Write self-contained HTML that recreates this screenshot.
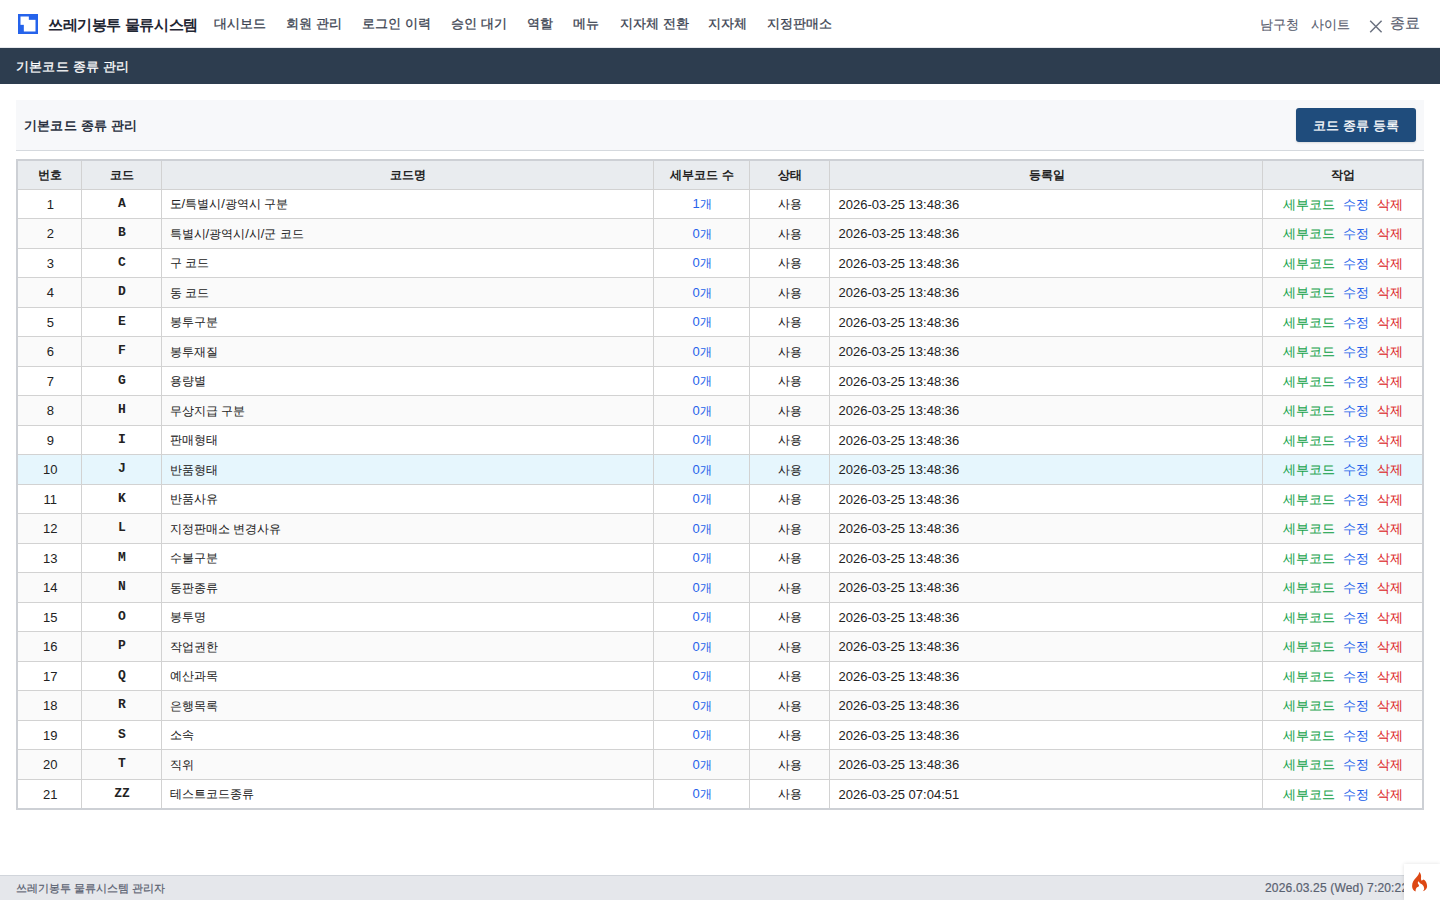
<!DOCTYPE html>
<html lang="ko"><head><meta charset="utf-8">
<style>
*{box-sizing:border-box}
html,body{margin:0;padding:0;width:1440px;height:900px;overflow:hidden;background:#fff;font-family:"Liberation Sans",sans-serif;color:#222}
.top{position:absolute;left:0;top:0;width:1440px;height:48px;background:#fff;border-bottom:1px solid #e6e8ec}
.logo{position:absolute;left:18px;top:14px;width:20px;height:20px}
.logo i{position:absolute;background:#fff}
.brand{position:absolute;left:48px;top:15px;font-size:15px;letter-spacing:-0.4px;font-weight:bold;color:#1f2633;line-height:20px;white-space:nowrap}
.nav{position:absolute;top:14px;font-size:13px;color:#3b4351;line-height:20px;white-space:nowrap;-webkit-text-stroke:0.3px #3b4351}
.rnav{position:absolute;top:14.5px;font-size:13px;color:#596070;-webkit-text-stroke:0.15px #596070;line-height:20px;white-space:nowrap}
.bar{position:absolute;left:0;top:48px;width:1440px;height:36px;background:#2d3d4f;color:#fff;font-size:13px;line-height:36px;padding-top:1px;padding-left:16px;letter-spacing:0.2px;-webkit-text-stroke:0.3px #fff}
.card{position:absolute;left:16px;top:100px;width:1408px;height:51px;background:#f7f8fa;border-bottom:1px solid #d5d9de}
.card .t{position:absolute;left:8px;top:16px;letter-spacing:0.2px;font-size:13px;font-weight:bold;line-height:20px;color:#2a3140}
.btn{position:absolute;right:8px;top:8px;width:120px;height:34px;background:#1f4c7c;color:#fff;border-radius:3px;font-size:13px;line-height:36px;text-align:center;-webkit-text-stroke:0.3px #fff;box-shadow:0 1px 2px rgba(0,0,0,.12)}
table{position:absolute;left:16px;top:159px;width:1408px;border-collapse:collapse;border:2px solid #cdd0d5;font-size:13px}
th{background:#e9ecef;font-weight:bold;height:29px;border:1px solid #d2d2d2;padding:2px 0 0 2px;color:#222;font-size:12px}
td{border:1px solid #d2d2d2;height:29.5px;padding:1px 8px 0 9px;line-height:17px;color:#222}
td.c{text-align:center;padding-left:10px;padding-right:8px}
tr.alt td{background:#fafafa}
tr.hl td{background:#e6f6fd}
.k{font-size:12px;-webkit-text-stroke:0.05px currentColor}
td:nth-child(3){padding-left:8px}.act .k{font-size:13px}
.code{font-family:"Liberation Mono",monospace;font-weight:bold;padding-top:0!important;padding-bottom:1px!important}
.cnt{color:#2563eb}
.act>span{margin:0 4px;-webkit-text-stroke:0.2px currentColor}
.act{padding-left:10px}
.g{color:#16a34a}.b{color:#2563eb}.r{color:#dc2626}
.foot{position:absolute;left:0;top:875px;width:1440px;height:25px;background:#e5e7eb;border-top:1px solid #d1d5db;font-size:11px;color:#596170;line-height:24px;-webkit-text-stroke:0.2px #596170}
.ci{position:absolute;left:1404px;top:864px;width:36px;height:36px;background:#fff;box-shadow:0 0 4px rgba(0,0,0,.12)}
</style></head><body>
<div class="top">
  <svg class="logo" width="20" height="20" viewBox="0 0 24 24"><rect width="24" height="24" fill="#2563eb"/><rect x="3" y="3" width="10" height="10" fill="#fff"/><rect x="7" y="7" width="14" height="14" fill="#fff"/></svg>
  <div class="brand">쓰레기봉투 물류시스템</div>
  <div class="nav" style="left:214px">대시보드</div>
  <div class="nav" style="left:286px">회원 관리</div>
  <div class="nav" style="left:362px">로그인 이력</div>
  <div class="nav" style="left:451px">승인 대기</div>
  <div class="nav" style="left:527px">역할</div>
  <div class="nav" style="left:573px">메뉴</div>
  <div class="nav" style="left:620px">지자체 전환</div>
  <div class="nav" style="left:708px">지자체</div>
  <div class="nav" style="left:767px">지정판매소</div>
  <div class="rnav" style="left:1260px">남구청</div>
  <div class="rnav" style="left:1311px">사이트</div>
  <svg style="position:absolute;left:1369px;top:20px" width="14" height="13" viewBox="0 0 14 13"><path d="M1.2 0.8L12.6 12.2M12.6 0.8L1.2 12.2" stroke="#6b7280" stroke-width="1.5" fill="none"/></svg>
  <div class="rnav" style="left:1389.5px;font-size:15px;top:13px;letter-spacing:0.8px">종료</div>
</div>
<div class="bar">기본코드 종류 관리</div>
<div class="card"><div class="t">기본코드 종류 관리</div><div class="btn">코드 종류 등록</div></div>
<table>
<colgroup><col style="width:64px"><col style="width:80px"><col style="width:492px"><col style="width:96px"><col style="width:80px"><col style="width:433px"><col></colgroup>
<tr><th>번호</th><th>코드</th><th>코드명</th><th>세부코드 수</th><th>상태</th><th>등록일</th><th>작업</th></tr>
<tr><td class="c">1</td><td class="c code">A</td><td><span class="k">도</span>/<span class="k">특별시</span>/<span class="k">광역시</span> <span class="k">구분</span></td><td class="c cnt">1<span class="k">개</span></td><td class="c"><span class="k">사용</span></td><td>2026-03-25 13:48:36</td><td class="c act"><span class="g"><span class="k">세부코드</span></span><span class="b"><span class="k">수정</span></span><span class="r"><span class="k">삭제</span></span></td></tr>
<tr class="alt"><td class="c">2</td><td class="c code">B</td><td><span class="k">특별시</span>/<span class="k">광역시</span>/<span class="k">시</span>/<span class="k">군</span> <span class="k">코드</span></td><td class="c cnt">0<span class="k">개</span></td><td class="c"><span class="k">사용</span></td><td>2026-03-25 13:48:36</td><td class="c act"><span class="g"><span class="k">세부코드</span></span><span class="b"><span class="k">수정</span></span><span class="r"><span class="k">삭제</span></span></td></tr>
<tr><td class="c">3</td><td class="c code">C</td><td><span class="k">구</span> <span class="k">코드</span></td><td class="c cnt">0<span class="k">개</span></td><td class="c"><span class="k">사용</span></td><td>2026-03-25 13:48:36</td><td class="c act"><span class="g"><span class="k">세부코드</span></span><span class="b"><span class="k">수정</span></span><span class="r"><span class="k">삭제</span></span></td></tr>
<tr class="alt"><td class="c">4</td><td class="c code">D</td><td><span class="k">동</span> <span class="k">코드</span></td><td class="c cnt">0<span class="k">개</span></td><td class="c"><span class="k">사용</span></td><td>2026-03-25 13:48:36</td><td class="c act"><span class="g"><span class="k">세부코드</span></span><span class="b"><span class="k">수정</span></span><span class="r"><span class="k">삭제</span></span></td></tr>
<tr><td class="c">5</td><td class="c code">E</td><td><span class="k">봉투구분</span></td><td class="c cnt">0<span class="k">개</span></td><td class="c"><span class="k">사용</span></td><td>2026-03-25 13:48:36</td><td class="c act"><span class="g"><span class="k">세부코드</span></span><span class="b"><span class="k">수정</span></span><span class="r"><span class="k">삭제</span></span></td></tr>
<tr class="alt"><td class="c">6</td><td class="c code">F</td><td><span class="k">봉투재질</span></td><td class="c cnt">0<span class="k">개</span></td><td class="c"><span class="k">사용</span></td><td>2026-03-25 13:48:36</td><td class="c act"><span class="g"><span class="k">세부코드</span></span><span class="b"><span class="k">수정</span></span><span class="r"><span class="k">삭제</span></span></td></tr>
<tr><td class="c">7</td><td class="c code">G</td><td><span class="k">용량별</span></td><td class="c cnt">0<span class="k">개</span></td><td class="c"><span class="k">사용</span></td><td>2026-03-25 13:48:36</td><td class="c act"><span class="g"><span class="k">세부코드</span></span><span class="b"><span class="k">수정</span></span><span class="r"><span class="k">삭제</span></span></td></tr>
<tr class="alt"><td class="c">8</td><td class="c code">H</td><td><span class="k">무상지급</span> <span class="k">구분</span></td><td class="c cnt">0<span class="k">개</span></td><td class="c"><span class="k">사용</span></td><td>2026-03-25 13:48:36</td><td class="c act"><span class="g"><span class="k">세부코드</span></span><span class="b"><span class="k">수정</span></span><span class="r"><span class="k">삭제</span></span></td></tr>
<tr><td class="c">9</td><td class="c code">I</td><td><span class="k">판매형태</span></td><td class="c cnt">0<span class="k">개</span></td><td class="c"><span class="k">사용</span></td><td>2026-03-25 13:48:36</td><td class="c act"><span class="g"><span class="k">세부코드</span></span><span class="b"><span class="k">수정</span></span><span class="r"><span class="k">삭제</span></span></td></tr>
<tr class="alt hl"><td class="c">10</td><td class="c code">J</td><td><span class="k">반품형태</span></td><td class="c cnt">0<span class="k">개</span></td><td class="c"><span class="k">사용</span></td><td>2026-03-25 13:48:36</td><td class="c act"><span class="g"><span class="k">세부코드</span></span><span class="b"><span class="k">수정</span></span><span class="r"><span class="k">삭제</span></span></td></tr>
<tr><td class="c">11</td><td class="c code">K</td><td><span class="k">반품사유</span></td><td class="c cnt">0<span class="k">개</span></td><td class="c"><span class="k">사용</span></td><td>2026-03-25 13:48:36</td><td class="c act"><span class="g"><span class="k">세부코드</span></span><span class="b"><span class="k">수정</span></span><span class="r"><span class="k">삭제</span></span></td></tr>
<tr class="alt"><td class="c">12</td><td class="c code">L</td><td><span class="k">지정판매소</span> <span class="k">변경사유</span></td><td class="c cnt">0<span class="k">개</span></td><td class="c"><span class="k">사용</span></td><td>2026-03-25 13:48:36</td><td class="c act"><span class="g"><span class="k">세부코드</span></span><span class="b"><span class="k">수정</span></span><span class="r"><span class="k">삭제</span></span></td></tr>
<tr><td class="c">13</td><td class="c code">M</td><td><span class="k">수불구분</span></td><td class="c cnt">0<span class="k">개</span></td><td class="c"><span class="k">사용</span></td><td>2026-03-25 13:48:36</td><td class="c act"><span class="g"><span class="k">세부코드</span></span><span class="b"><span class="k">수정</span></span><span class="r"><span class="k">삭제</span></span></td></tr>
<tr class="alt"><td class="c">14</td><td class="c code">N</td><td><span class="k">동판종류</span></td><td class="c cnt">0<span class="k">개</span></td><td class="c"><span class="k">사용</span></td><td>2026-03-25 13:48:36</td><td class="c act"><span class="g"><span class="k">세부코드</span></span><span class="b"><span class="k">수정</span></span><span class="r"><span class="k">삭제</span></span></td></tr>
<tr><td class="c">15</td><td class="c code">O</td><td><span class="k">봉투명</span></td><td class="c cnt">0<span class="k">개</span></td><td class="c"><span class="k">사용</span></td><td>2026-03-25 13:48:36</td><td class="c act"><span class="g"><span class="k">세부코드</span></span><span class="b"><span class="k">수정</span></span><span class="r"><span class="k">삭제</span></span></td></tr>
<tr class="alt"><td class="c">16</td><td class="c code">P</td><td><span class="k">작업권한</span></td><td class="c cnt">0<span class="k">개</span></td><td class="c"><span class="k">사용</span></td><td>2026-03-25 13:48:36</td><td class="c act"><span class="g"><span class="k">세부코드</span></span><span class="b"><span class="k">수정</span></span><span class="r"><span class="k">삭제</span></span></td></tr>
<tr><td class="c">17</td><td class="c code">Q</td><td><span class="k">예산과목</span></td><td class="c cnt">0<span class="k">개</span></td><td class="c"><span class="k">사용</span></td><td>2026-03-25 13:48:36</td><td class="c act"><span class="g"><span class="k">세부코드</span></span><span class="b"><span class="k">수정</span></span><span class="r"><span class="k">삭제</span></span></td></tr>
<tr class="alt"><td class="c">18</td><td class="c code">R</td><td><span class="k">은행목록</span></td><td class="c cnt">0<span class="k">개</span></td><td class="c"><span class="k">사용</span></td><td>2026-03-25 13:48:36</td><td class="c act"><span class="g"><span class="k">세부코드</span></span><span class="b"><span class="k">수정</span></span><span class="r"><span class="k">삭제</span></span></td></tr>
<tr><td class="c">19</td><td class="c code">S</td><td><span class="k">소속</span></td><td class="c cnt">0<span class="k">개</span></td><td class="c"><span class="k">사용</span></td><td>2026-03-25 13:48:36</td><td class="c act"><span class="g"><span class="k">세부코드</span></span><span class="b"><span class="k">수정</span></span><span class="r"><span class="k">삭제</span></span></td></tr>
<tr class="alt"><td class="c">20</td><td class="c code">T</td><td><span class="k">직위</span></td><td class="c cnt">0<span class="k">개</span></td><td class="c"><span class="k">사용</span></td><td>2026-03-25 13:48:36</td><td class="c act"><span class="g"><span class="k">세부코드</span></span><span class="b"><span class="k">수정</span></span><span class="r"><span class="k">삭제</span></span></td></tr>
<tr><td class="c">21</td><td class="c code">ZZ</td><td><span class="k">테스트코드종류</span></td><td class="c cnt">0<span class="k">개</span></td><td class="c"><span class="k">사용</span></td><td>2026-03-25 07:04:51</td><td class="c act"><span class="g"><span class="k">세부코드</span></span><span class="b"><span class="k">수정</span></span><span class="r"><span class="k">삭제</span></span></td></tr>
</table>
<div class="foot"><span style="position:absolute;left:16px">쓰레기봉투 물류시스템 관리자</span><span style="position:absolute;left:1265px;font-size:12px;letter-spacing:0.17px">2026.03.25 (Wed) 7:20:22</span></div>
<div class="ci"><svg style="position:absolute;left:6px;top:6px" width="20" height="24" viewBox="0 0 20 24"><path fill="#dd4814" d="M9.3,2.1 C10.6,3.4 11.2,5.2 11.1,6.7 C11,8 10.7,9.3 11.7,10.7 C12.4,10.3 13,10 13.6,9.6 C15.6,10.8 17,13 17.1,16.2 C17.2,18.4 15.5,20.5 12.8,21.3 C13.8,20.3 14.3,19.2 14.1,18.2 C13.9,16.4 12.8,15 11.5,14.1 C10.5,13.4 9.4,12.9 8.5,11.2 C7.8,11.9 7.6,12.9 8,13.7 C8.3,14.3 8.9,14.8 9,15.6 C9.1,16.6 8.3,17 7.5,16.9 C6.6,17.4 5.4,18.6 5.6,21.6 C3.4,20.6 2.2,18.8 2.1,16.2 C2,12.6 4,9.8 6.2,7.6 C7.7,6.1 9,4.2 9.3,2.1 Z"/></svg></div>
</body></html>
